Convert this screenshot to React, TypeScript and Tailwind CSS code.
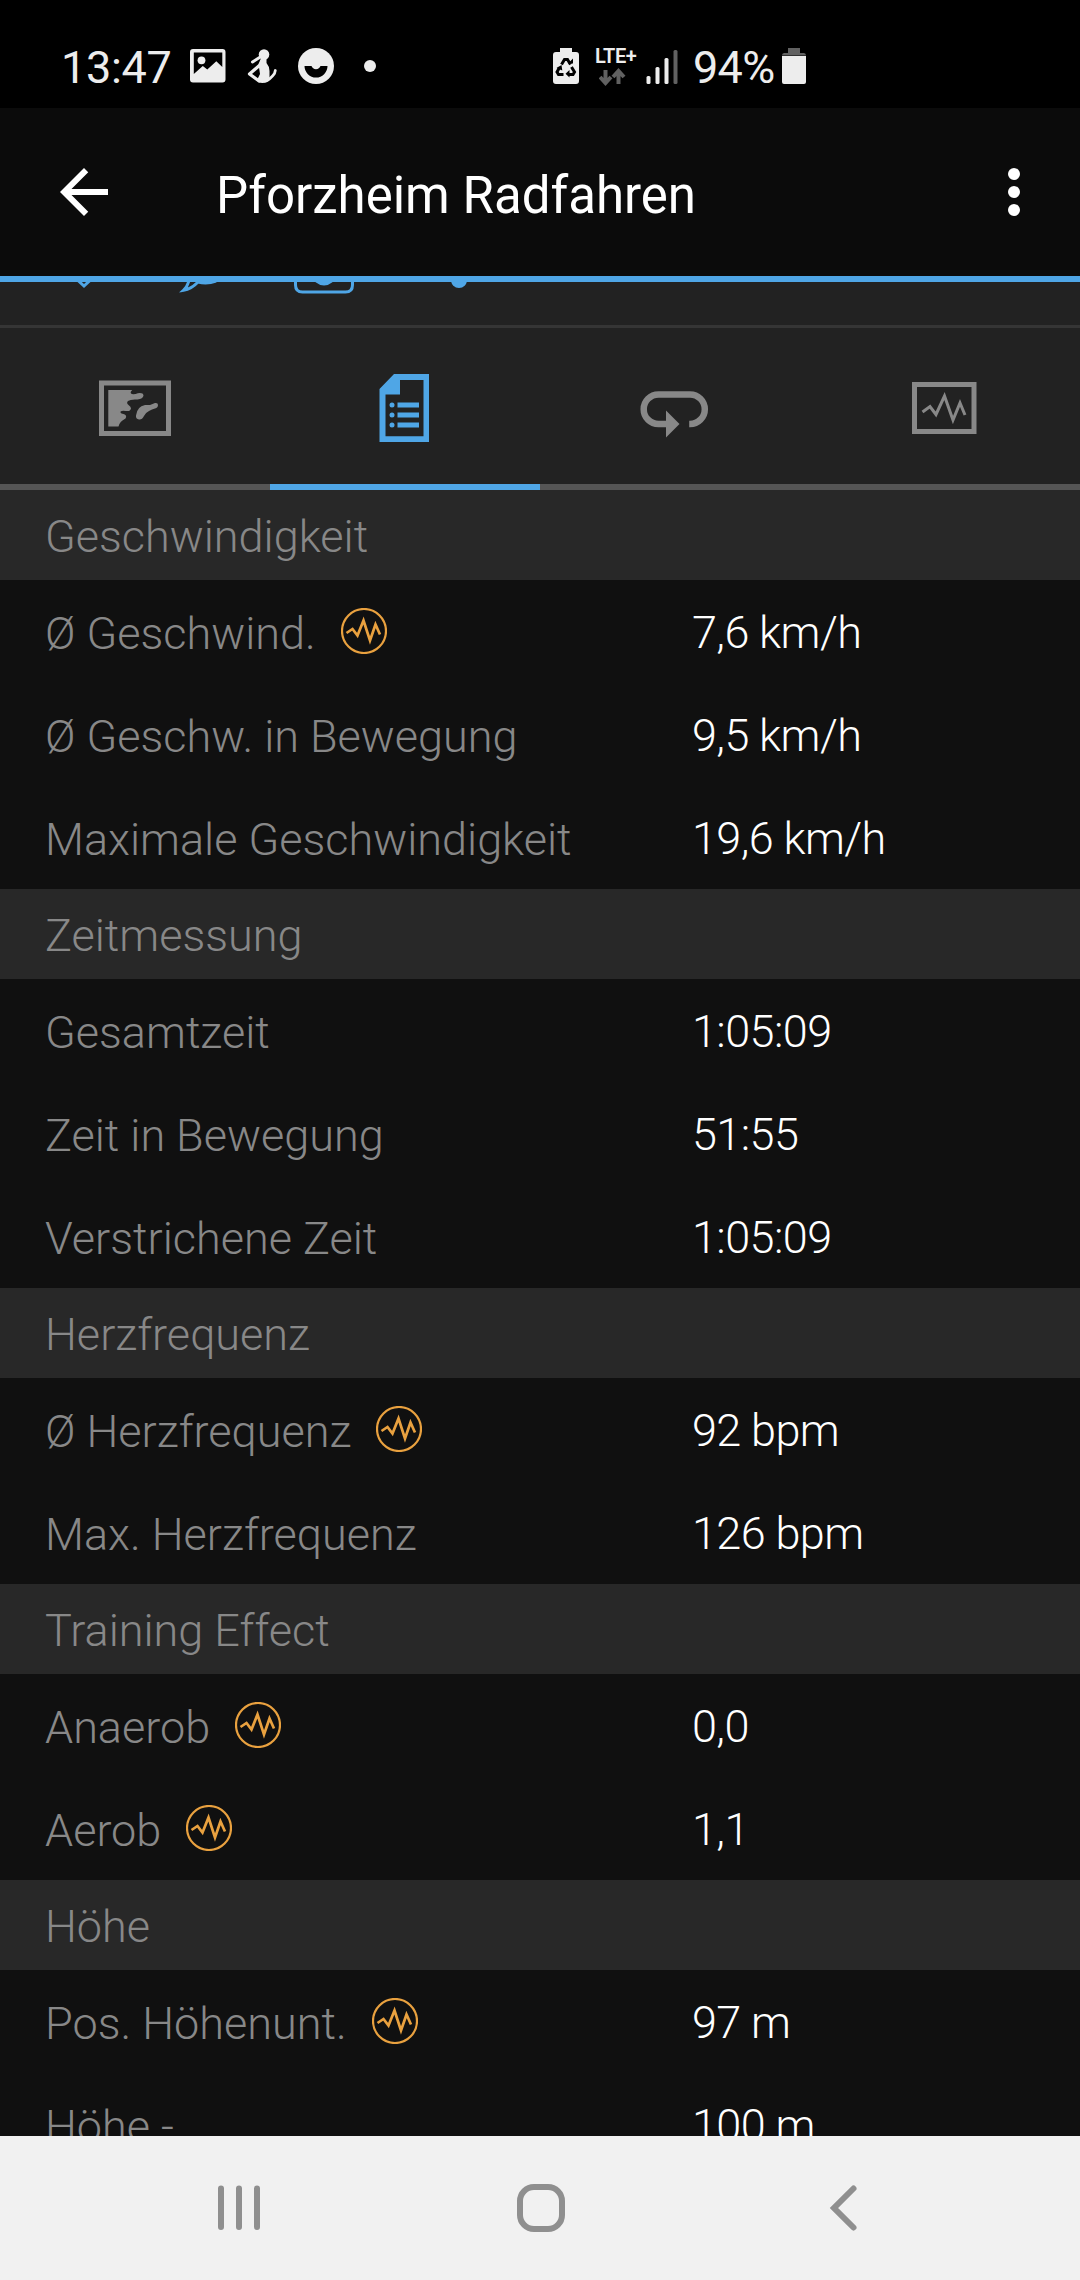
import type { ReactNode } from "react";

interface Metric {
  label: string;
  value: string;
  hasChart?: boolean;
}

interface Section {
  title: string;
  metrics: Metric[];
}

const sections: Section[] = [
  {
    title: "Geschwindigkeit",
    metrics: [
      { label: "Ø Geschwind.", value: "7,6 km/h", hasChart: true },
      { label: "Ø Geschw. in Bewegung", value: "9,5 km/h" },
      { label: "Maximale Geschwindigkeit", value: "19,6 km/h" },
    ],
  },
  {
    title: "Zeitmessung",
    metrics: [
      { label: "Gesamtzeit", value: "1:05:09" },
      { label: "Zeit in Bewegung", value: "51:55" },
      { label: "Verstrichene Zeit", value: "1:05:09" },
    ],
  },
  {
    title: "Herzfrequenz",
    metrics: [
      { label: "Ø Herzfrequenz", value: "92 bpm", hasChart: true },
      { label: "Max. Herzfrequenz", value: "126 bpm" },
    ],
  },
  {
    title: "Training Effect",
    metrics: [
      { label: "Anaerob", value: "0,0", hasChart: true },
      { label: "Aerob", value: "1,1", hasChart: true },
    ],
  },
  {
    title: "Höhe",
    metrics: [
      { label: "Pos. Höhenunt.", value: "97 m", hasChart: true },
      { label: "Höhe -", value: "100 m" },
    ],
  },
];

function StatusBar() {
  return (
    <header className="flex h-[108px] shrink-0 bg-black pt-[44px] text-[#ededed]">
      <span className="ml-[61px] mt-px w-[129px] whitespace-nowrap text-[45px] leading-[45px] tracking-[-0.3px]">
        13:47
      </span>
      <svg className="h-[44px] w-[190px] shrink-0" viewBox="190 44 190 44" fill="currentColor">
        {/* Picture */}
        <path
          fillRule="evenodd"
          d="M193 49h29.500q3 0 3 3v27.500q0 3-3 3H193q-3 0-3-3V52q0-3 3-3zm.8 3.500V74l9-8 4.500 3.500 9-8.300 6 5.800V52.500z"
        />
        <circle cx="201.500" cy="60.300" r="3.900" />
        {/* Seated figure */}
        <circle cx="264" cy="54.500" r="5.300" />
        <path d="M261.500 57h5v6q3 3.500 3 8v9q-2 3-7 3-5 0-5.500-3l3-6-1.500-10z" />
        <g fill="none" stroke="currentColor" strokeLinecap="round" strokeLinejoin="round">
          <path d="M260 65l-10.500 9 9.500 7" strokeWidth="3.200" />
          <path d="M252.500 62l7-4.500" strokeWidth="3" />
          <path d="M265 81q5-1 9.500-7.500l.8-3" strokeWidth="2.800" />
        </g>
        {/* Smiley */}
        <circle cx="316" cy="66" r="18" />
        <path d="M304.500 66h7a4.800 4.800 0 0 0 9 0h7a11.500 11.500 0 0 1-23 0z" fill="#000" />
        <circle cx="370" cy="66" r="6" />
      </svg>
      <svg className="ml-[173px] h-[44px] w-[32px] shrink-0" viewBox="553 44 32 44" fill="currentColor">
        <path d="M560 48h12v4h4q3 0 3 3v26q0 3-3 3h-20q-3 0-3-3V55q0-3 3-3h4z" />
        <path
          d="M561.500 64.500l3-5h3l3 5M571.500 67l3 5-1.500 2.500h-5M563.500 74.500h-5L557 72l2.500-4.500"
          fill="none"
          stroke="#000"
          strokeWidth="3"
        />
        <path d="M568 63.500h5v-5zM569.500 70v7.500l-4-3.700zM556.500 68l5-3 .8 5.500z" fill="#000" />
      </svg>
      <div className="ml-[10px] mt-[1px] w-[51px] shrink-0">
        <div className="text-[20px] font-semibold leading-[23px] tracking-[-0.4px]">LTE+</div>
        <svg className="ml-[4px] h-[18px] w-[27px]" viewBox="0 0 27 18" fill="none" stroke="#616161" strokeWidth="4">
          <path d="M6.500 2v12M1 9l5.500 6L12 9M19.500 16V4M14 9l5.500-6L25 9" />
        </svg>
      </div>
      <svg className="h-[44px] w-[32px] shrink-0" viewBox="646 44 32 44" fill="currentColor">
        <rect x="646.500" y="76" width="4" height="8" rx="1.500" />
        <rect x="655.500" y="67" width="4" height="17" rx="1.500" />
        <rect x="664.500" y="58" width="4" height="26" rx="1.500" />
        <rect x="673.500" y="50" width="4" height="34" rx="1.500" fill="#616161" />
      </svg>
      <span className="ml-[15px] mt-px w-[89px] whitespace-nowrap text-[45px] leading-[45px] tracking-[-0.7px]">
        94%
      </span>
      <svg className="h-[44px] w-[24px] shrink-0" viewBox="782 44 24 44" fill="currentColor">
        <path d="M788 48h12v5h4q2 0 2 2.500h-24q0-2.500 2-2.500h4z" fill="#616161" />
        <path d="M782 56h24v26q0 2-2 2h-20q-2 0-2-2z" />
      </svg>
    </header>
  );
}

function AppBar() {
  return (
    <div className="flex h-[174px] shrink-0 items-center border-b-[6px] border-[#4fa6e6] bg-[#0b0b0b] text-white">
      <svg className="ml-[48px] h-[72px] w-[72px] shrink-0" viewBox="0 0 24 24" fill="currentColor">
        <path d="M20 11H7.830l5.590-5.590L12 4l-8 8 8 8 1.410-1.410L7.830 13H20v-2z" />
      </svg>
      <h1 className="ml-[96px] mt-[7px] flex-1 whitespace-nowrap text-[51px] leading-[60px]">
        Pforzheim Radfahren
      </h1>
      <svg className="mr-[30px] h-[72px] w-[72px] shrink-0" viewBox="0 0 24 24" fill="currentColor">
        <circle cx="12" cy="6" r="2" />
        <circle cx="12" cy="12" r="2" />
        <circle cx="12" cy="18" r="2" />
      </svg>
    </div>
  );
}

// Lower edge of the social actions, scrolled under the app bar
function ActionStrip() {
  return (
    <div className="h-[46px] shrink-0 border-b-[3px] border-[#353535] bg-[#222]">
      <svg className="h-[43px] w-[540px]" viewBox="0 282 540 43" fill="none" stroke="#4fa6e6" strokeWidth="3">
        <path d="M77 279.500l7 6.500 7-6.500" />
        <path d="M189 280q-1 6-5.500 10.300 8-1.300 14.500-8.300 9 2.500 18-1" />
        <path d="M295.500 280v5q0 7 7 7h43q7 0 7-7v-5" />
        <path d="M313 280q11 11 22 0z" fill="#4fa6e6" stroke="none" />
        <circle cx="459" cy="280" r="8" fill="#4fa6e6" stroke="none" />
      </svg>
    </div>
  );
}

function Tab({ active, children }: { active?: boolean; children: ReactNode }) {
  return (
    <button
      className={
        active
          ? "flex flex-1 border-b-[6px] border-[#4fa6e6] text-[#4fa6e6]"
          : "flex flex-1 border-b-[6px] border-[#555] text-[#888]"
      }
    >
      {children}
    </button>
  );
}

function Tabs() {
  return (
    <nav className="flex h-[162px] shrink-0 bg-[#222]">
      <Tab>
        <svg className="h-[156px] w-[270px]" viewBox="0 328 270 156" fill="currentColor">
          <rect x="101.500" y="383" width="67" height="50.500" fill="none" stroke="currentColor" strokeWidth="5" />
          <path d="M108.300 390h24q-3 2.500-.5 4 3 .5 6-.8 5.500-.8 5.700 2.300-.5 3.500-6 4-7-.5-9.500 1.500-2 2 .5 4 2.500 1.500 2.500 3.500-.5 3-5 2.500-6-1-5.500 1.500.5 1.200 3 1.500 4 1 2 4.500-6 3-7 8h-10.200z" />
          <path d="M136 415.500q1-9 9-10.500h5l5-2q3-.5 3 2 0 2.500-3 3.500-3 .5-6 2.500-4 2-5 5-2 4-5 3.500-3.500-.5-3-4z" />
        </svg>
      </Tab>
      <Tab active>
        <svg className="h-[156px] w-[270px]" viewBox="270 328 270 156" fill="currentColor">
          <path
            fillRule="evenodd"
            d="M394 374h35v68h-49.500v-53zM400 380v14.500h-14.500V436.300h38V380z"
          />
          <circle cx="392" cy="405" r="2.500" />
          <circle cx="392" cy="415" r="2.500" />
          <circle cx="392" cy="425" r="2.500" />
          <path d="M397.500 402.500H419v5h-21.500zM397.500 412.500H419v5h-21.500zM397.500 422.500H419v5h-21.500z" />
        </svg>
      </Tab>
      <Tab>
        <svg className="h-[156px] w-[270px]" viewBox="540 328 270 156" fill="currentColor">
          <path
            d="M668 424h-9.500a14.700 14.700 0 0 1 0-29.600h31.500a14.700 14.700 0 0 1 0 29.600h-.8"
            fill="none"
            stroke="currentColor"
            strokeWidth="6.500"
          />
          <path d="M666 410.500l13.500 13.500-13.500 13.500z" />
        </svg>
      </Tab>
      <Tab>
        <svg className="h-[156px] w-[270px]" viewBox="810 328 270 156" fill="none" stroke="currentColor">
          <rect x="914.500" y="384.500" width="59.500" height="47" strokeWidth="5" />
          <path d="M922.500 412l7.500-5.500 6 8 8.500-18.500 8.500 24 7-17 5 12" strokeWidth="3" />
        </svg>
      </Tab>
    </nav>
  );
}

function ChartIcon() {
  return (
    <svg className="-mt-px h-[46px] w-[46px] shrink-0" viewBox="0 0 46 46" fill="none" stroke="#e9a13f">
      <circle cx="23" cy="23" r="22" strokeWidth="2.200" />
      <path d="M5.500 25l6-4 5 6.500 6-15 6.500 20 5.500-16 4.500 10" strokeWidth="2.700" />
    </svg>
  );
}

function MetricRow({ metric }: { metric: Metric }) {
  return (
    <div className="flex h-[103px] items-center">
      <div className="flex w-[692px] items-center gap-[25px] pl-[45px]">
        <span className="mt-[3px] whitespace-nowrap text-[#888]">{metric.label}</span>
        {metric.hasChart && <ChartIcon />}
      </div>
      <span className="mt-0.5 whitespace-nowrap tracking-[-0.6px] text-white">{metric.value}</span>
    </div>
  );
}

function SectionHeader({ title }: { title: string }) {
  return (
    <h2 className="flex h-[90px] items-center bg-[#282828] pl-[45px] pt-0.5 text-[#888]">
      {title}
    </h2>
  );
}

function NavigationBar() {
  return (
    <footer className="flex h-[144px] shrink-0 bg-[#f1f1f1]">
      <svg className="h-[144px] w-[1080px]" viewBox="0 2136 1080 144" fill="none" stroke="#8f8f8f">
        <path d="M221 2188.500v38.500M239 2188.500v38.500M257 2188.500v38.500" strokeWidth="6" strokeLinecap="round" />
        <rect x="520" y="2187" width="42" height="42" rx="14" strokeWidth="6" />
        <path d="M853.500 2188.500l-19.500 19.500 19.500 19.500" strokeWidth="6" strokeLinecap="round" />
      </svg>
    </footer>
  );
}

export default function App() {
  return (
    <div className="flex h-[2280px] w-[1080px] flex-col overflow-hidden bg-[#101010] font-['Roboto',sans-serif]">
      <StatusBar />
      <AppBar />
      <ActionStrip />
      <Tabs />
      <main className="min-h-0 flex-1 overflow-hidden text-[45px] font-light leading-[53px]">
        {sections.map((section) => (
          <section key={section.title}>
            <SectionHeader title={section.title} />
            {section.metrics.map((metric) => (
              <MetricRow key={metric.label} metric={metric} />
            ))}
          </section>
        ))}
      </main>
      <NavigationBar />
    </div>
  );
}
